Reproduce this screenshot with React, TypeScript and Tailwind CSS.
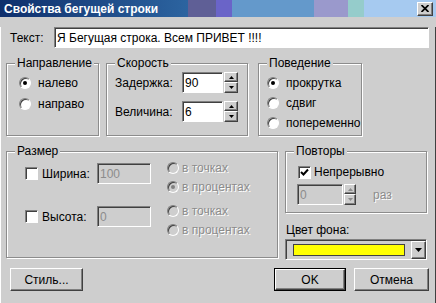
import React from 'react'

function Radio({ checked = false, disabled = false }: { checked?: boolean; disabled?: boolean }) {
  return (
    <span
      className={
        'flex items-center justify-center w-[12px] h-[12px] shrink-0 rounded-full border border-t-[#808080] border-l-[#808080] border-r-white border-b-white shadow-[inset_1px_1px_0_#404040] ' +
        (disabled ? 'bg-[#cecece]' : 'bg-white')
      }
    >
      {checked && (
        <span className={'w-[4px] h-[4px] rounded-full ' + (disabled ? 'bg-[#808080]' : 'bg-black')} />
      )}
    </span>
  )
}

function Check({ checked = false }: { checked?: boolean }) {
  return (
    <span className="flex items-center justify-center w-[13px] h-[13px] shrink-0 bg-white border border-t-[#808080] border-l-[#808080] border-r-white border-b-white shadow-[inset_1px_1px_0_#404040]">
      {checked && (
        <svg width="9" height="9" viewBox="0 0 9 9">
          <path d="M1 4 L3.5 6.5 L8 1.5" stroke="#000" strokeWidth="2" fill="none" />
        </svg>
      )}
    </span>
  )
}

function Arrow({ up, disabled }: { up?: boolean; disabled?: boolean }) {
  return (
    <svg width="5" height="3" viewBox="0 0 5 3">
      <path d={up ? 'M2.5 0 L5 3 L0 3 Z' : 'M0 0 L5 0 L2.5 3 Z'} fill={disabled ? '#8c8c8c' : '#000'} />
    </svg>
  )
}

function Spinner({ disabled = false, w = 'w-[14px]' }: { disabled?: boolean; w?: string }) {
  const btn =
    'flex items-center justify-center bg-[#cecece] border border-t-white border-l-white border-r-[#404040] border-b-[#404040] shadow-[inset_-1px_-1px_0_#808080]'
  return (
    <div className={'flex flex-col h-[21px] ml-[1px] ' + w}>
      <div className={btn + ' h-[10px]'}>
        <Arrow up disabled={disabled} />
      </div>
      <div className={btn + ' h-[11px]'}>
        <Arrow disabled={disabled} />
      </div>
    </div>
  )
}

function Field({ value, width, disabled = false }: { value: string; width: string; disabled?: boolean }) {
  return (
    <div
      className={
        'flex items-center h-[21px] pl-[2px] border border-t-[#808080] border-l-[#808080] border-r-white border-b-white shadow-[inset_1px_1px_0_#404040] ' +
        width +
        (disabled ? ' bg-[#cecece] text-[#8c8c8c]' : ' bg-white')
      }
    >
      {value}
    </div>
  )
}

function Group({ title, className, children }: { title: string; className: string; children?: React.ReactNode }) {
  return (
    <div className={'relative border border-[#8c8c8c] shadow-[inset_1px_1px_0_#fff,1px_1px_0_#fff] ' + className}>
      <span className="absolute -top-[8px] left-[8px] px-[2px] bg-[#cecece] leading-[14px]">{title}</span>
      {children}
    </div>
  )
}

function Btn({ label, width, isDefault = false }: { label: string; width: string; isDefault?: boolean }) {
  return (
    <div className={'h-[23px] ' + width + (isDefault ? ' border border-black' : '')}>
      <div className="flex items-center justify-center h-full bg-[#cecece] border border-t-white border-l-white border-r-[#404040] border-b-[#404040] shadow-[inset_-1px_-1px_0_#808080]">
        {label}
      </div>
    </div>
  )
}

const dim = 'text-[#8c8c8c] [text-shadow:1px_1px_0_#fff]'

export default function App() {
  return (
    <div className="w-[436px] h-[303px] bg-[#cecece] text-black text-[12px] leading-[14px] font-['Liberation_Sans',Arial,sans-serif] overflow-hidden">
      {/* Title bar */}
      <div className="flex items-center justify-between h-[17px] pl-[4px] pr-[3px] bg-[linear-gradient(to_right,#0f2f6c_0px,#2c64a0_188px,#5f5f96_188px,#5f5f96_216px,#6a64c8_216px,#6a64c8_232px,#6499cb_232px,#6499cb_314px,#9a99cc_314px,#9a99cc_348px,#95cccb_348px,#95cccb_364px,#a6caf0_364px)]">
        <span className="text-white font-bold text-[12px]">Свойства бегущей строки</span>
        <div className="flex items-center justify-center w-[16px] h-[14px] bg-[#cecece] border border-t-white border-l-white border-r-[#404040] border-b-[#404040] shadow-[inset_-1px_-1px_0_#808080]">
          <svg width="8" height="7" viewBox="0 0 8 7">
            <path d="M0.5 0 L7.5 7 M7.5 0 L0.5 7" stroke="#000" strokeWidth="1.7" />
          </svg>
        </div>
      </div>

      <div className="h-[283px] border-l border-l-white border-r border-r-[#404040] border-b border-b-[#404040]">
        {/* Text row */}
        <div className="flex items-center mt-[10px] pl-[9px]">
          <span className="w-[44px]">Текст:</span>
          <Field value="Я Бегущая строка. Всем ПРИВЕТ !!!!" width="w-[375px]" />
        </div>

        {/* Row 2 */}
        <div className="flex items-start mt-[15px] pl-[5px]">
          <Group title="Направление" className="w-[93px] h-[73px]">
            <div className="flex flex-col pl-[12px] pt-[12px] gap-[7px]">
              <div className="flex items-center gap-[7px]">
                <Radio checked />
                <span>налево</span>
              </div>
              <div className="flex items-center gap-[7px]">
                <Radio />
                <span>направо</span>
              </div>
            </div>
          </Group>

          <Group title="Скорость" className="ml-[7px] w-[142px] h-[73px]">
            <div className="flex flex-col pl-[8px] pt-[8px] gap-[8px]">
              <div className="flex items-center">
                <span className="w-[67px]">Задержка:</span>
                <Field value="90" width="w-[41px]" />
                <Spinner />
              </div>
              <div className="flex items-center">
                <span className="w-[67px]">Величина:</span>
                <Field value="6" width="w-[41px]" />
                <Spinner />
              </div>
            </div>
          </Group>

          <Group title="Поведение" className="ml-[10px] w-[104px] h-[73px]">
            <div className="flex flex-col pl-[8px] pt-[12px] gap-[6px]">
              <div className="flex items-center gap-[7px]">
                <Radio checked />
                <span>прокрутка</span>
              </div>
              <div className="flex items-center gap-[7px]">
                <Radio />
                <span>сдвиг</span>
              </div>
              <div className="flex items-center gap-[7px]">
                <Radio />
                <span>попеременно</span>
              </div>
            </div>
          </Group>
        </div>

        {/* Row 3 */}
        <div className="flex items-start mt-[15px] pl-[5px]">
          <Group title="Размер" className="w-[272px] h-[107px]">
            <div className="flex flex-col pl-[18px] pt-[11px] gap-[10px]">
              {[
                { label: 'Ширина:', value: '100', second: true },
                { label: 'Высота:', value: '0', second: false },
              ].map((r) => (
                <div key={r.label} className="flex items-start">
                  <div className="flex items-center h-[21px] w-[72px] gap-[4px]">
                    <Check />
                    <span>{r.label}</span>
                  </div>
                  <Field value={r.value} width="w-[54px]" disabled />
                  <div className="flex flex-col ml-[16px] -mt-[5px]">
                    <div className="flex items-center h-[19px] gap-[3px]">
                      <Radio disabled />
                      <span className={dim}>в точках</span>
                    </div>
                    <div className="flex items-center h-[19px] gap-[3px]">
                      <Radio disabled checked={r.second} />
                      <span className={dim}>в процентах</span>
                    </div>
                  </div>
                </div>
              ))}
            </div>
          </Group>

          <div className="flex flex-col ml-[7px] w-[142px]">
            <Group title="Повторы" className="h-[62px]">
              <div className="flex flex-col pl-[12px] pt-[13px]">
                <div className="flex items-center gap-[3px]">
                  <Check checked />
                  <span>Непрерывно</span>
                </div>
                <div className="flex items-center mt-[5px] -ml-[1px]">
                  <Field value="0" width="w-[46px]" disabled />
                  <Spinner disabled w="w-[12px]" />
                  <span className={'ml-[17px] ' + dim}>раз</span>
                </div>
              </div>
            </Group>
            <span className="mt-[10px] ml-[1px]">Цвет фона:</span>
            <div className="flex items-stretch mt-[2px] h-[21px] border border-t-[#808080] border-l-[#808080] border-r-white border-b-white shadow-[inset_1px_1px_0_#404040] bg-white">
              <div className="flex-1 flex items-center pl-[6px] pr-[4px] bg-[#cecece] ml-[1px] mt-[1px]">
                <div className="w-[112px] h-[12px] bg-[#ffff00] border border-[#404040]" />
              </div>
              <div className="flex items-center justify-center w-[15px] mt-[1px] bg-[#cecece] border border-t-white border-l-white border-r-[#404040] border-b-[#404040] shadow-[inset_-1px_-1px_0_#808080]">
                <svg width="7" height="4" viewBox="0 0 7 4">
                  <path d="M0 0 L7 0 L3.5 4 Z" fill="#000" />
                </svg>
              </div>
            </div>
          </div>
        </div>

        {/* Buttons */}
        <div className="flex items-center mt-[8px] pl-[9px] pr-[6px]">
          <Btn label="Стиль..." width="w-[73px]" />
          <div className="flex-1" />
          <Btn label="OK" width="w-[72px]" isDefault />
          <div className="w-[8px]" />
          <Btn label="Отмена" width="w-[75px]" />
        </div>
      </div>
    </div>
  )
}
